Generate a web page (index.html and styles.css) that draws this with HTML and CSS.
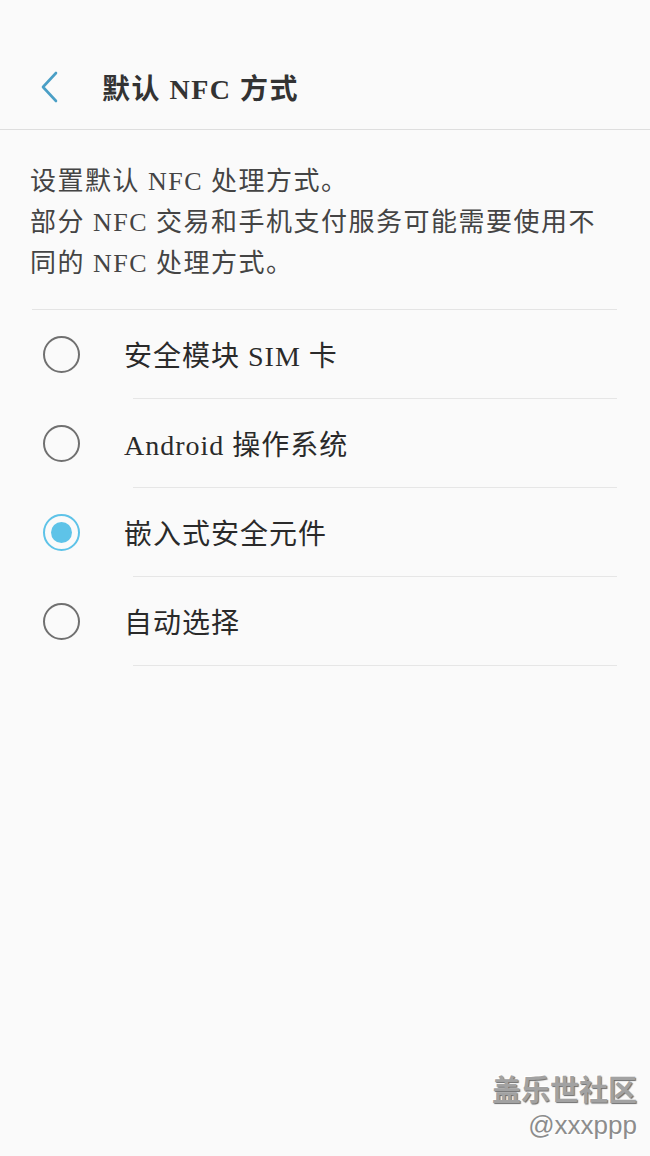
FILE: index.html
```html
<!DOCTYPE html>
<html>
    <head>
        <title>默认 NFC 方式</title>
        <link rel="stylesheet" href="styles.css">
    </head>

    <body>
        <div class="page">
            <!-- Title bar -->
            <div class="titleBar">
                <svg class="back" width="20" height="32" viewBox="0 0 20 32">
                    <polyline points="16,2 3,16 16,30" fill="none" stroke="#4a9fc6" stroke-width="2.6" stroke-linecap="round" stroke-linejoin="round"/>
                </svg>
                <span class="title">默认 NFC 方式</span>
            </div>

            <div class="description">
                设置默认 NFC 处理方式。<br>
                部分 NFC 交易和手机支付服务可能需要使用不<br>
                同的 NFC 处理方式。
            </div>

            <div class="optionList">
                <div class="option">
                    <span class="radio"></span>
                    <span class="label">安全模块 SIM 卡</span>
                </div>
                <div class="option">
                    <span class="radio"></span>
                    <span class="label">Android 操作系统</span>
                </div>
                <div class="option">
                    <span class="radio checked"></span>
                    <span class="label">嵌入式安全元件</span>
                </div>
                <div class="option">
                    <span class="radio"></span>
                    <span class="label">自动选择</span>
                </div>
            </div>

            <div class="watermark">
                <div class="wmTitle">盖乐世社区</div>
                <div class="wmUser">@xxxppp</div>
            </div>
        </div>
    </body>
</html>
```

FILE: styles.css
```css
html, body {
    margin: 0;
    width: 100%;
    height: 100%;
    background: #fafafa;
}

.page {
    position: relative;
    height: 1156px;
    font-family: "Liberation Serif", "Noto Sans CJK SC", serif;
    color: #2b2b2b;
}

/* top 44px is the status bar area */
.titleBar {
    display: flex;
    align-items: center;
    height: 85px;
    padding-top: 44px;
    padding-left: 40px;
    border-bottom: 1px solid #dedede;
}

.back {
    margin-top: 1px;
}

.title {
    margin-left: 42px;
    font-size: 28px;
    font-weight: bold;
    letter-spacing: 1.5px;
    color: #333;
}

.description {
    padding: 31px 30px 25px 30px;
    font-size: 26px;
    line-height: 41px;
    letter-spacing: 1.5px;
    color: #444;
}

.optionList {
    margin: 0 33px 0 32px;
    border-top: 1px solid #e4e4e4;
}

.option {
    display: flex;
    align-items: center;
    height: 88px;
    position: relative;
}

/* inset divider under each row */
.option::after {
    content: "";
    position: absolute;
    left: 101px;
    right: 0;
    bottom: -1px;
    height: 1px;
    background: #e6e6e6;
}

.option + .option {
    margin-top: 1px;
}

.radio {
    box-sizing: border-box;
    width: 37px;
    height: 37px;
    margin-left: 11px;
    border: 2.5px solid #707070;
    border-radius: 50%;
    display: flex;
    align-items: center;
    justify-content: center;
}

.radio.checked {
    border-color: #5ec3e8;
}

.radio.checked::before {
    content: "";
    width: 21px;
    height: 21px;
    border-radius: 50%;
    background: #5ec3e8;
}

.label {
    margin-left: 44px;
    font-size: 28px;
    letter-spacing: 1px;
    color: #2a2a2a;
}

.watermark {
    position: absolute;
    right: 13px;
    bottom: 14px;
    text-align: right;
    font-family: "Noto Sans CJK SC", "Liberation Sans", sans-serif;
}

.wmTitle {
    font-size: 29px;
    font-weight: bold;
    line-height: 40px;
    color: #a2a2a2;
    text-shadow: 1px 1px 1px #6c6c6c, -1px -1px 0 #ffffff;
}

.wmUser {
    font-family: "Liberation Sans", sans-serif;
    font-size: 26px;
    line-height: 34px;
    color: #8c8c8c;
    text-shadow: 1px 1px 0 #ffffff;
}
```
